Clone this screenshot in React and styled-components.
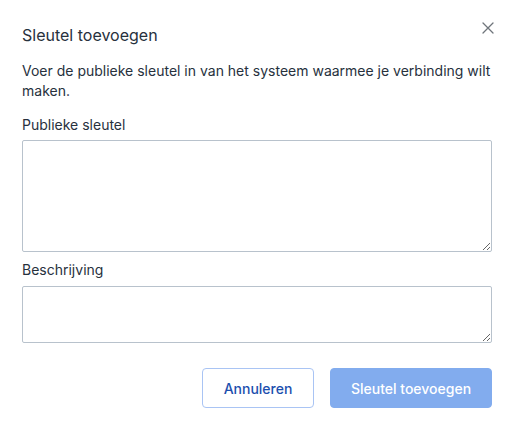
import React from "react";
import styled, { createGlobalStyle } from "styled-components";

const Global = createGlobalStyle`
  html, body { margin: 0; padding: 0; background: #ffffff; }
  body { font-family: Inter, "Noto Sans", sans-serif; -webkit-font-smoothing: antialiased; }
  * { box-sizing: border-box; }
`;

const Dialog = styled.div`
  position: relative;
  width: 513px;
  height: 428px;
  padding: 23px 21px 0 22px;
  display: flex;
  flex-direction: column;
  background: #fff;
`;

const Title = styled.h2`
  margin: 0;
  font-size: 16px;
  line-height: 24px;
  font-weight: 400;
  color: #27313d;
`;

const Close = styled.button`
  position: absolute;
  top: 20px;
  right: 17px;
  width: 16px;
  height: 16px;
  padding: 0;
  border: 0;
  background: transparent;
  display: flex;
  align-items: center;
  justify-content: center;
  cursor: pointer;
`;

const Description = styled.p`
  margin: 14px 0 0;
  font-size: 14px;
  line-height: 20px;
  color: #27313d;
`;

const Field = styled.div`
  display: flex;
  flex-direction: column;
  margin-top: ${(p) => p.$top}px;
`;

const Label = styled.label`
  font-size: 14px;
  line-height: 20px;
  font-weight: 400;
  color: #27313d;
  margin-bottom: ${(p) => p.$gap}px;
`;

const TextArea = styled.textarea`
  display: block;
  width: 100%;
  height: ${(p) => p.$h}px;
  border: 1px solid #b8c2cc;
  border-radius: 2px;
  padding: 8px 10px;
  font-family: inherit;
  font-size: 14px;
  color: #27313d;
  resize: vertical;
  outline: none;
`;

const Footer = styled.div`
  display: flex;
  justify-content: flex-end;
  gap: 16px;
  margin-top: 25px;
`;

const Button = styled.button`
  height: 40px;
  padding: 0;
  border-radius: 4px;
  font-family: inherit;
  font-size: 14px;
  font-weight: 500;
  white-space: nowrap;
  cursor: pointer;
  ${(p) =>
    p.$primary
      ? `
    width: 162px;
    background: #82acee;
    border: 1px solid #82acee;
    color: #ffffff;
  `
      : `
    width: 112px;
    background: #ffffff;
    border: 1px solid #a9c4f4;
    color: #1c4fae;
  `}
`;

export default function App() {
  return (
    <>
      <Global />
      <Dialog>
        <Title>Sleutel toevoegen</Title>
        <Close aria-label="Sluiten">
          <svg width="12" height="12" viewBox="0 0 12 12">
            <path d="M1 1L11 11M11 1L1 11" stroke="#6f757b" strokeWidth="1.3" strokeLinecap="round" />
          </svg>
        </Close>
        <Description>
          Voer de publieke sleutel in van het systeem waarmee je verbinding wilt maken.
        </Description>
        <Field $top={14}>
          <Label $gap={5}>Publieke sleutel</Label>
          <TextArea $h={112} />
        </Field>
        <Field $top={8}>
          <Label $gap={6}>Beschrijving</Label>
          <TextArea $h={57} />
        </Field>
        <Footer>
          <Button>Annuleren</Button>
          <Button $primary disabled>Sleutel toevoegen</Button>
        </Footer>
      </Dialog>
    </>
  );
}
